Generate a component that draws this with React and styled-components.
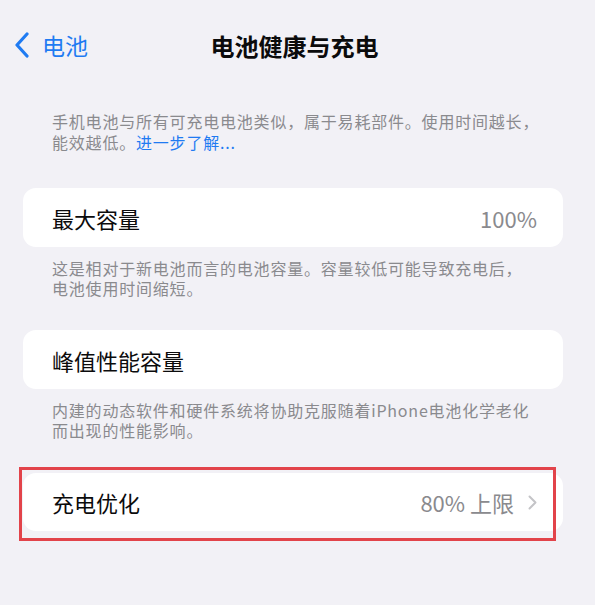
import React from 'react';
import styled, { createGlobalStyle } from 'styled-components';

const GlobalStyle = createGlobalStyle`
	html, body {
		margin: 0;
		padding: 0;
		background: #f2f1f6;
	}
	body {
		font-family: "Noto Sans CJK SC", "Liberation Sans", sans-serif;
		-webkit-font-smoothing: antialiased;
	}
`;

const Page = styled.div`
	width: 595px;
	height: 605px;
	background: #f2f1f6;
	overflow: hidden;
	padding: 0 32px 0 23px;
	box-sizing: border-box;
`;

const Nav = styled.div`
	height: 90px;
	display: grid;
	grid-template-columns: 1fr auto 1fr;
	align-items: center;
	margin-left: -9px;
`;

const Back = styled.div`
	display: flex;
	align-items: center;
	gap: 12px;
	color: #1f7bf2;
	font-size: 23px;
`;

const Title = styled.div`
	font-size: 24px;
	font-weight: 700;
	color: #0b0b0c;
	padding-left: 12px;
`;

const Note = styled.p`
	margin: ${(p) => p.top}px 0 0;
	padding: 0 29px;
	font-size: 16px;
	letter-spacing: 0.8px;
	line-height: ${(p) => p.lh}px;
	color: #8a8a8e;
	white-space: nowrap;
`;

const Link = styled.span`
	color: #1f7bf2;
`;

const Card = styled.div`
	margin-top: ${(p) => p.top}px;
	height: ${(p) => p.h}px;
	background: #ffffff;
	border-radius: 13px;
	display: flex;
	align-items: center;
	justify-content: space-between;
	padding: 0 26px 0 29px;
	font-size: 22px;
	color: #0b0b0c;
`;

const Value = styled.div`
	display: flex;
	align-items: center;
	gap: 14px;
	color: #8a8a8e;
	font-size: 22px;
`;

const Marked = styled.div`
	position: relative;
	margin-top: 33px;
`;

const Highlight = styled.div`
	position: absolute;
	left: -4px;
	top: -6px;
	width: 537px;
	height: 74px;
	box-sizing: border-box;
	border: 3px solid #e2434a;
	pointer-events: none;
`;

const BackChevron = () => (
	<svg width="16" height="26" viewBox="0 0 16 26">
		<path d="M13 2 L3 13 L13 24" fill="none" stroke="#1f7bf2" strokeWidth="3.2" strokeLinecap="round" strokeLinejoin="round" />
	</svg>
);

const Chevron = () => (
	<svg width="9" height="15" viewBox="0 0 9 15">
		<path d="M1.5 1.5 L7.5 7.5 L1.5 13.5" fill="none" stroke="#c4c4c7" strokeWidth="2" strokeLinecap="round" strokeLinejoin="round" />
	</svg>
);

const App = () => (
	<>
		<GlobalStyle />
		<Page>
			<Nav>
				<Back>
					<BackChevron />
					电池
				</Back>
				<Title>电池健康与充电</Title>
				<div />
			</Nav>
			<Note top={21} lh={21}>
				手机电池与所有可充电电池类似，属于易耗部件。使用时间越长，
				<br />
				能效越低。<Link>进一步了解...</Link>
			</Note>
			<Card top={35} h={59}>
				最大容量
				<Value>100%</Value>
			</Card>
			<Note top={11} lh={20}>
				这是相对于新电池而言的电池容量。容量较低可能导致充电后，
				<br />
				电池使用时间缩短。
			</Note>
			<Card top={32} h={59}>
				峰值性能容量
			</Card>
			<Note top={11} lh={20}>
				内建的动态软件和硬件系统将协助克服随着iPhone电池化学老化
				<br />
				而出现的性能影响。
			</Note>
			<Marked>
				<Card top={0} h={58}>
					充电优化
					<Value>
						80% 上限
						<Chevron />
					</Value>
				</Card>
				<Highlight />
			</Marked>
		</Page>
	</>
);

export default App;
